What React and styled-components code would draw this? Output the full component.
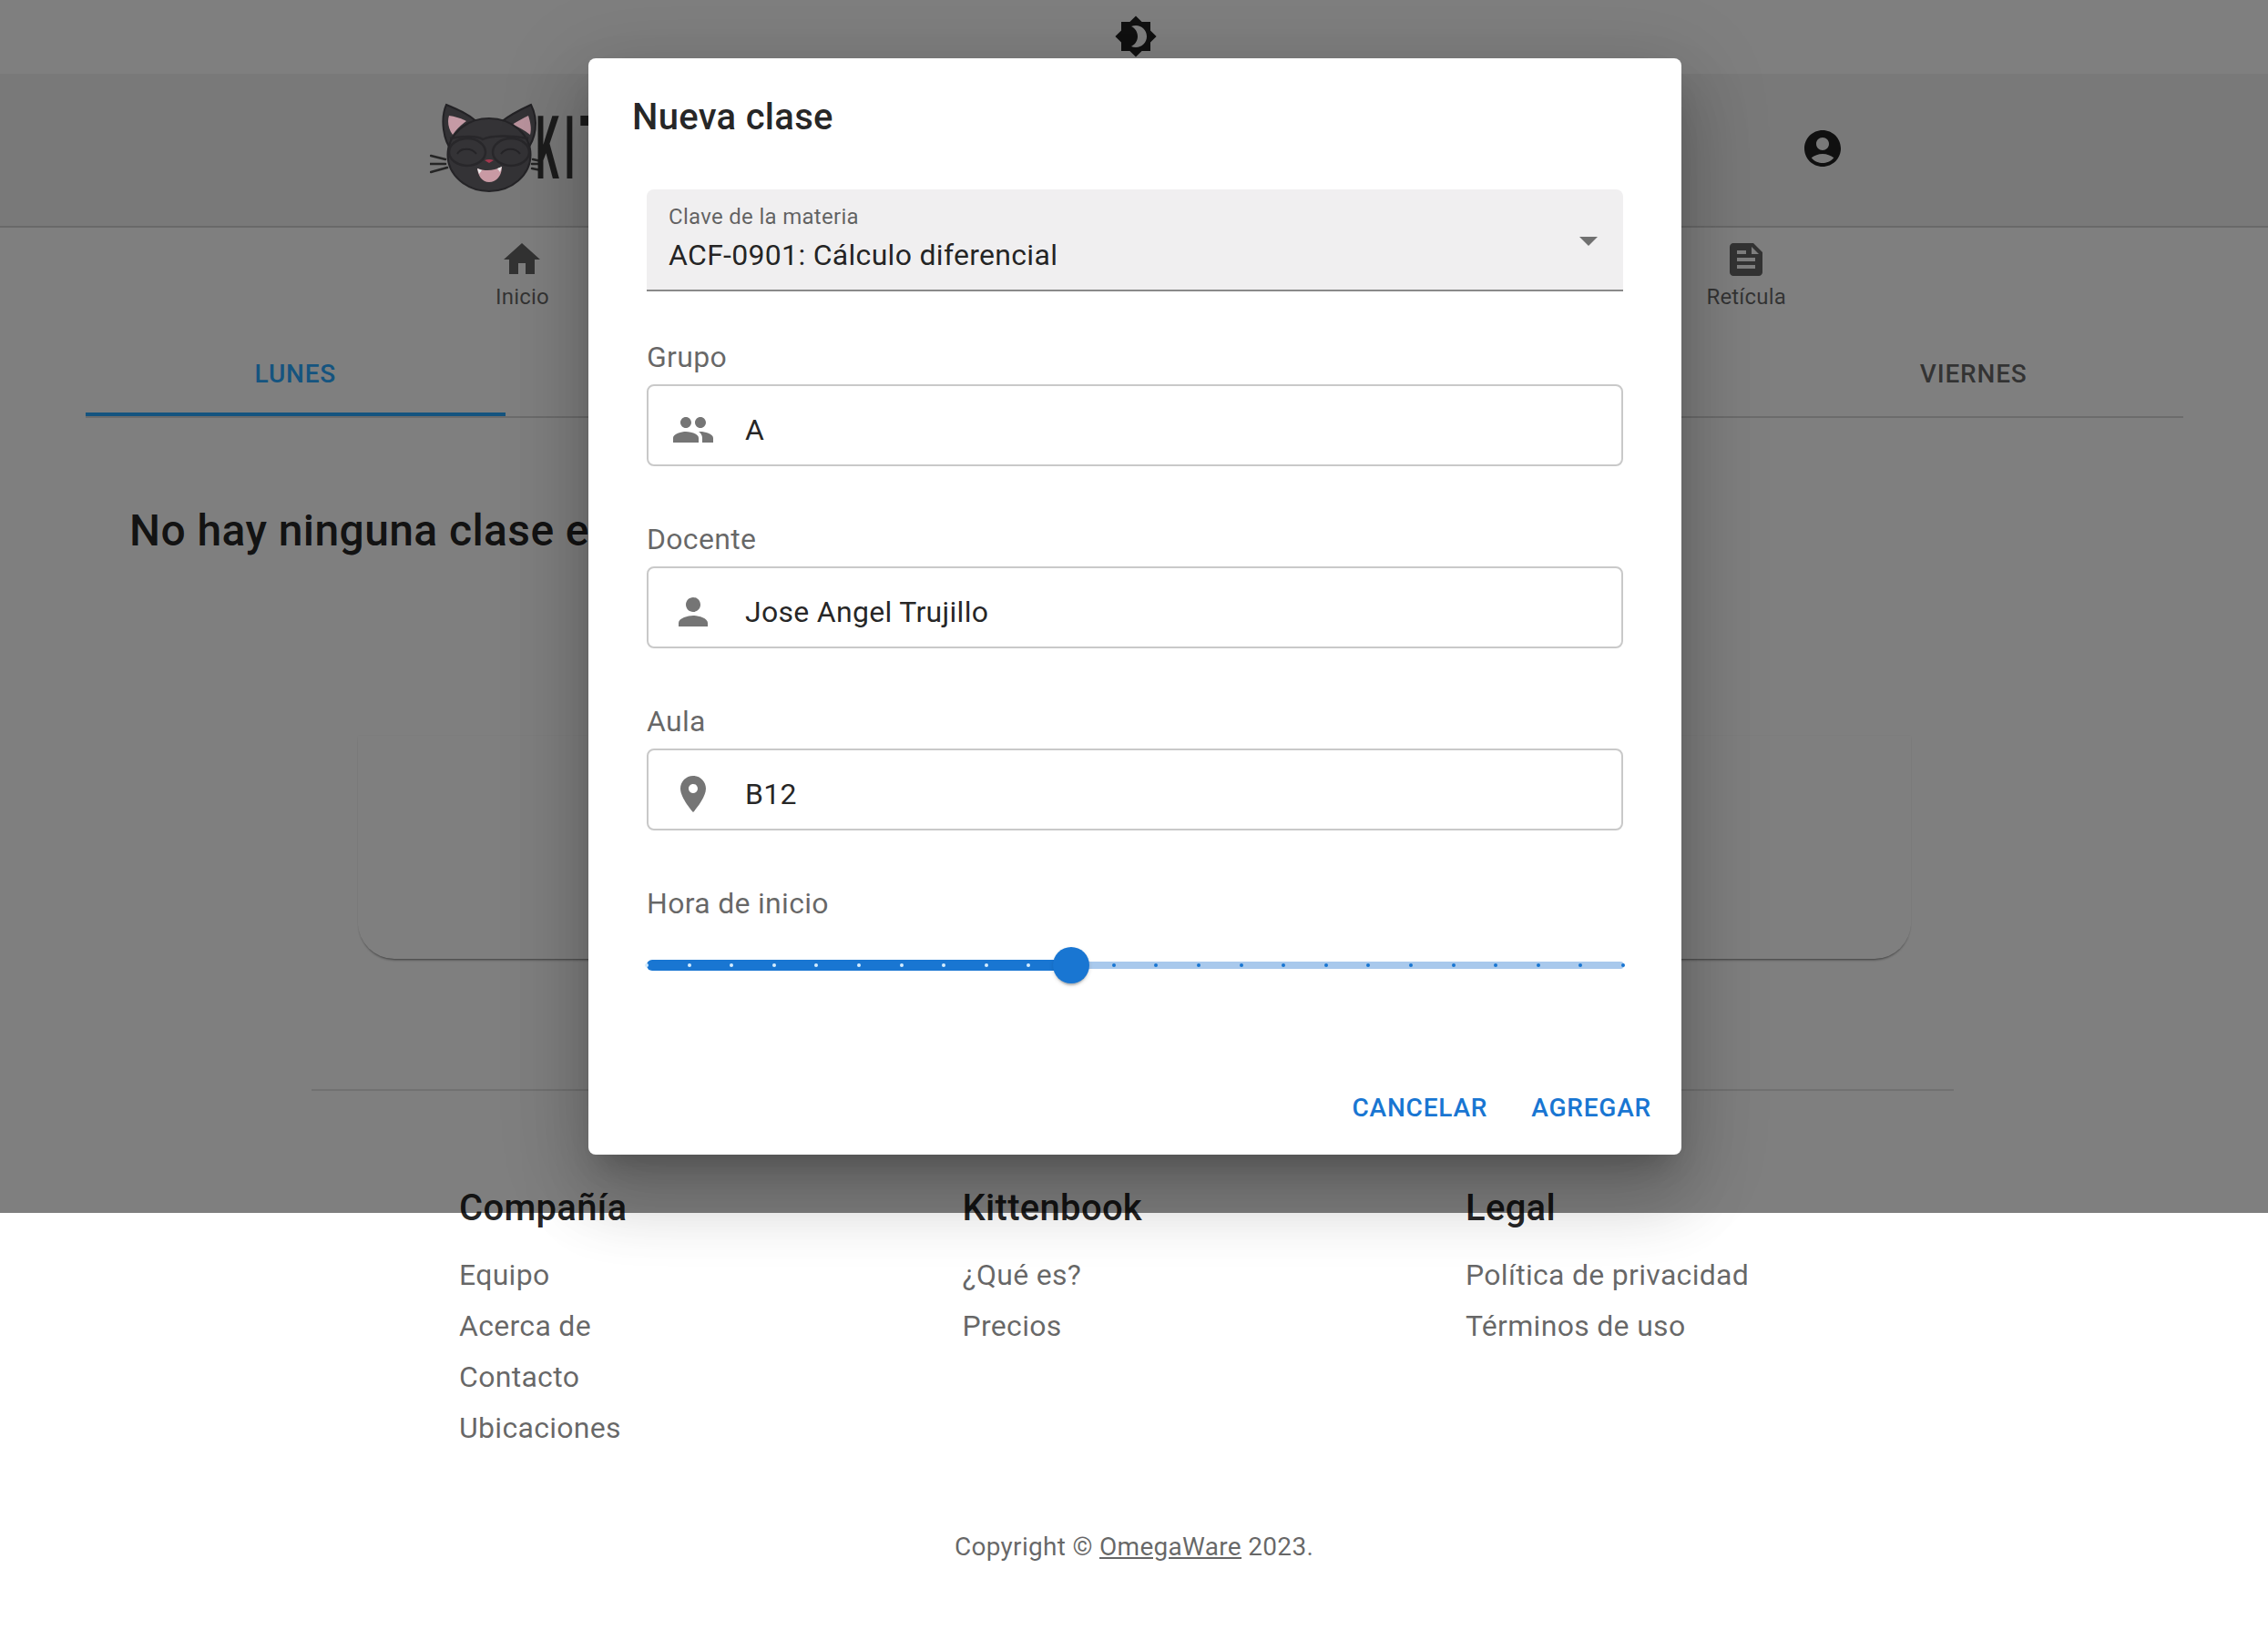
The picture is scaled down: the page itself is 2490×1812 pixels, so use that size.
import React from 'react';
import styled, { createGlobalStyle } from 'styled-components';

const HOURS = 23;
const CURRENT_HOUR = 10;

const icons = {
    theme: 'M20 8.69V4h-4.69L12 .69 8.69 4H4v4.69L.69 12 4 15.31V20h4.69L12 23.31 15.31 20H20v-4.69L23.31 12 20 8.69zM12 18c-.89 0-1.74-.2-2.5-.55C11.56 16.5 13 14.42 13 12s-1.44-4.5-3.5-5.45C10.26 6.2 11.11 6 12 6c3.31 0 6 2.69 6 6s-2.69 6-6 6z',
    home: 'M10 20v-6h4v6h5v-8h3L12 3 2 12h3v8z',
    account: 'M12 2C6.48 2 2 6.48 2 12s4.48 10 10 10 10-4.48 10-10S17.52 2 12 2zm0 4c1.93 0 3.5 1.57 3.5 3.5S13.93 13 12 13s-3.5-1.57-3.5-3.5S10.07 6 12 6zm0 14c-2.03 0-4.43-.82-6.14-2.88C7.55 15.8 9.68 15 12 15s4.45.8 6.14 2.12C16.43 19.18 14.03 20 12 20z',
    feed: 'M16 3H5c-1.1 0-1.99.9-1.99 2L3 19c0 1.1.89 2 1.99 2H19c1.1 0 2-.9 2-2V8l-5-5zM7 7h5v2H7V7zm10 10H7v-2h10v2zm0-4H7v-2h10v2zm-2-4V5l4 4h-4z',
    people: 'M16 11c1.66 0 2.99-1.34 2.99-3S17.66 5 16 5c-1.66 0-3 1.34-3 3s1.34 3 3 3zm-8 0c1.66 0 2.99-1.34 2.99-3S9.66 5 8 5C6.34 5 5 6.34 5 8s1.34 3 3 3zm0 2c-2.33 0-7 1.17-7 3.5V19h14v-2.5c0-2.33-4.67-3.5-7-3.5zm8 0c-.29 0-.62.02-.97.05 1.16.84 1.97 1.97 1.97 3.45V19h6v-2.5c0-2.33-4.67-3.5-7-3.5z',
    person: 'M12 12c2.21 0 4-1.79 4-4s-1.79-4-4-4-4 1.79-4 4 1.79 4 4 4zm0 2c-2.67 0-8 1.34-8 4v2h16v-2c0-2.66-5.33-4-8-4z',
    place: 'M12 2C8.13 2 5 5.13 5 9c0 5.25 7 13 7 13s7-7.75 7-13c0-3.87-3.13-7-7-7zm0 9.5c-1.38 0-2.5-1.12-2.5-2.5s1.12-2.5 2.5-2.5 2.5 1.12 2.5 2.5-1.12 2.5-2.5 2.5z',
    arrow: 'M7 10l5 5 5-5z',
};

const footerColumns = [
    { title: 'Compañía', links: ['Equipo', 'Acerca de', 'Contacto', 'Ubicaciones'] },
    { title: 'Kittenbook', links: ['¿Qué es?', 'Precios'] },
    { title: 'Legal', links: ['Política de privacidad', 'Términos de uso'] },
];

const fields = [
    { label: 'Grupo', icon: 'people', value: 'A' },
    { label: 'Docente', icon: 'person', value: 'Jose Angel Trujillo' },
    { label: 'Aula', icon: 'place', value: 'B12' },
];

function Icon({ name, size = 48, color = 'currentColor' }) {
    return (
        <svg width={size} height={size} viewBox="0 0 24 24" fill={color}>
            <path d={icons[name]} />
        </svg>
    );
}

function CatLogo() {
    return (
        <svg width="124" height="100" viewBox="0 -2 124 100">
            {/* ears */}
            <path d="M24 50 C15 40 11 16 18 0 C30 5 42 10 52 19 L30 40z" fill="#333235" stroke="#232225" strokeWidth="2" />
            <path d="M106 50 C116 38 120 18 111 0 C100 5 88 11 78 19 L100 40z" fill="#333235" stroke="#232225" strokeWidth="2" />
            <path d="M25 33 C20 26 19 18 21 12 C28 13 35 15 40 18 C34 22 29 27 25 33z" fill="#c59aa5" />
            <path d="M110 33 C112 26 110 18 108 12 C102 15 96 18 90 22 C97 24 104 28 110 33z" fill="#b9929c" />
            {/* head */}
            <ellipse cx="65" cy="55" rx="45.5" ry="40" fill="#343336" stroke="#252427" strokeWidth="2" />
            {/* glasses and closed eyes */}
            <g fill="none" stroke="#28272a" strokeWidth="2.5">
                <path d="M22 37 C40 34 52 34 58 38 C66 34 88 33 108 37" />
                <ellipse cx="41" cy="52" rx="20" ry="15" />
                <ellipse cx="89" cy="52" rx="20" ry="15" />
            </g>
            <g fill="none" stroke="#252427" strokeWidth="2">
                <path d="M30 54 C34 47 46 47 51 54" />
                <path d="M78 54 C83 47 94 47 99 54" />
            </g>
            {/* nose and mouth */}
            <path d="M60 61 Q65 59 70 61 L65 64z" fill="#a5384f" />
            <path d="M52 70 C60 73 70 73 79 68 C79 78 73 85 65 85 C57 85 53 78 52 70z" fill="#c99aa4" />
            <path d="M52 70 L57 72 L54 76z M79 68 L74 70 L77 74z" fill="#e8e8e8" />
            {/* whiskers */}
            <g stroke="#252525" strokeWidth="2.5" strokeLinecap="round">
                <path d="M1 56 L17 60" />
                <path d="M0 65 L17 65" />
                <path d="M1 74 L19 69" />
                <path d="M113 60 L122 62" />
                <path d="M112 65 L122 65" />
                <path d="M112 70 L122 72" />
            </g>
        </svg>
    );
}

function App() {
    const ticks = Array.from({ length: HOURS + 1 }, (_, i) => i);
    const percent = (CURRENT_HOUR / HOURS) * 100;

    return (
        <Page>
            <GlobalStyle />
            <TopBar>
                <Icon name="theme" />
            </TopBar>
            <Header>
                <Logo>
                    <CatLogo />
                    <LogoText>KITTENBOOK</LogoText>
                </Logo>
                <Icon name="account" />
            </Header>
            <Nav>
                <NavItem>
                    <Icon name="home" />
                    <span>Inicio</span>
                </NavItem>
                <NavItem>
                    <Icon name="feed" />
                    <span>Retícula</span>
                </NavItem>
            </Nav>
            <Tabs>
                <Tab $active>Lunes</Tab>
                <Tab>Martes</Tab>
                <Tab>Miércoles</Tab>
                <Tab>Jueves</Tab>
                <Tab>Viernes</Tab>
            </Tabs>
            <Panel>
                <EmptyTitle>No hay ninguna clase este día</EmptyTitle>
                <Card />
            </Panel>
            <Divider />
            <Footer>
                <FooterColumns>
                    {footerColumns.map((column) => (
                        <FooterColumn key={column.title}>
                            <FooterTitle>{column.title}</FooterTitle>
                            {column.links.map((link) => (
                                <FooterLink key={link}>{link}</FooterLink>
                            ))}
                        </FooterColumn>
                    ))}
                </FooterColumns>
                <Copyright>
                    Copyright © <u>OmegaWare</u> 2023.
                </Copyright>
            </Footer>

            <Backdrop>
                <Dialog>
                    <DialogTitle>Nueva clase</DialogTitle>
                    <DialogContent>
                        <SelectBox>
                            <SelectLabel>Clave de la materia</SelectLabel>
                            <SelectValue>ACF-0901: Cálculo diferencial</SelectValue>
                            <SelectArrow>
                                <Icon name="arrow" color="#707070" />
                            </SelectArrow>
                        </SelectBox>
                        {fields.map((field) => (
                            <Field key={field.label}>
                                <FieldLabel>{field.label}</FieldLabel>
                                <InputBox>
                                    <Icon name={field.icon} color="#757575" />
                                    <InputText>{field.value}</InputText>
                                </InputBox>
                            </Field>
                        ))}
                        <Field>
                            <FieldLabel>Hora de inicio</FieldLabel>
                            <Slider>
                                <Rail />
                                <SliderFill style={{ width: `${percent}%` }} />
                                {ticks.map((tick) => (
                                    <Tick
                                        key={tick}
                                        $active={tick < CURRENT_HOUR}
                                        style={{ left: `${(tick / HOURS) * 100}%` }}
                                    />
                                ))}
                                <Thumb style={{ left: `${percent}%` }} />
                            </Slider>
                        </Field>
                    </DialogContent>
                    <DialogActions>
                        <TextButton>Cancelar</TextButton>
                        <TextButton>Agregar</TextButton>
                    </DialogActions>
                </Dialog>
            </Backdrop>
        </Page>
    );
}

const GlobalStyle = createGlobalStyle`
    html, body {
        margin: 0;
        padding: 0;
        background: #fff;
    }
    body {
        font-family: Roboto, "Liberation Sans", sans-serif;
        color: rgba(0, 0, 0, 0.87);
    }
`;

const Page = styled.div`
    position: relative;
    width: 2490px;
    height: 1812px;
    overflow: hidden;
    background: #fff;
`;

const TopBar = styled.div`
    height: 81px;
    box-sizing: border-box;
    padding: 0 0 2px 3px;
    display: flex;
    align-items: center;
    justify-content: center;
    color: #212121;
`;

const Header = styled.header`
    height: 169px;
    box-sizing: border-box;
    background: #f2f2f2;
    border-bottom: 2px solid #d2d2d2;
    display: flex;
    align-items: center;
    justify-content: space-between;
    padding: 0 465px 3px 472px;
    color: #212121;
`;

const Logo = styled.div`
    position: relative;
    z-index: 2;
    display: flex;
    align-items: center;
    height: 100px;
`;

const LogoText = styled.span`
    display: inline-block;
    width: 100px;
    margin-left: -8px;
    font-size: 96px;
    line-height: 100px;
    font-weight: 700;
    letter-spacing: 14px;
    white-space: nowrap;
    color: #1c1c1c;
    transform: scaleX(0.42);
    transform-origin: left center;
`;

const Nav = styled.nav`
    height: 117px;
    box-sizing: border-box;
    display: flex;
    justify-content: space-between;
    padding: 11px 529px 0 544px;
`;

const NavItem = styled.div`
    display: flex;
    flex-direction: column;
    align-items: center;
    gap: 3px;
    color: rgba(0, 0, 0, 0.6);
    font-size: 24px;
    letter-spacing: 0.2px;
`;

const Tabs = styled.div`
    margin: 0 93px 0 94px;
    height: 90px;
    display: grid;
    grid-template-columns: repeat(5, 1fr);
    border-bottom: 2px solid #d8d8d8;
`;

const Tab = styled.div`
    display: flex;
    align-items: center;
    justify-content: center;
    height: 90px;
    box-sizing: border-box;
    font-size: 28px;
    font-weight: 500;
    letter-spacing: 0.8px;
    text-transform: uppercase;
    color: ${(props) => (props.$active ? '#2aa8ff' : 'rgba(0, 0, 0, 0.6)')};
    border-bottom: 4px solid ${(props) => (props.$active ? '#2aa8ff' : 'transparent')};
`;

const Panel = styled.section`
    height: 737px;
    box-sizing: border-box;
    padding: 96px 48px 0;
    margin-left: 94px;
`;

const EmptyTitle = styled.h2`
    margin: 0;
    font-size: 48px;
    line-height: 56px;
    font-weight: 500;
    letter-spacing: 0.4px;
    color: rgba(0, 0, 0, 0.87);
    white-space: nowrap;
`;

const Card = styled.div`
    margin: 197px 0 0 251px;
    width: 1705px;
    height: 245px;
    border-radius: 0 0 40px 40px;
    box-shadow: 0 3px 3px -2px rgba(0, 0, 0, 0.55), 0 0 2px rgba(0, 0, 0, 0.08);
`;

const Divider = styled.hr`
    margin: 0 345px 0 342px;
    border: 0;
    border-top: 2px solid #e3e3e3;
`;

const Footer = styled.footer`
    padding: 102px 0 0 504px;
`;

const FooterColumns = styled.div`
    display: grid;
    grid-template-columns: repeat(3, 552.5px);
    height: 379px;
`;

const FooterColumn = styled.div`
    display: flex;
    flex-direction: column;
`;

const FooterTitle = styled.h3`
    margin: 0 0 18px;
    height: 54px;
    font-size: 40px;
    line-height: 54px;
    font-weight: 500;
    letter-spacing: 0.3px;
    color: rgba(0, 0, 0, 0.87);
`;

const FooterLink = styled.a`
    display: block;
    height: 56px;
    font-size: 32px;
    line-height: 56px;
    letter-spacing: 0.3px;
    color: rgba(0, 0, 0, 0.6);
`;

const Copyright = styled.p`
    margin: 0 0 0 -504px;
    text-align: center;
    font-size: 28px;
    line-height: 40px;
    letter-spacing: 0.3px;
    color: rgba(0, 0, 0, 0.6);
`;

const Backdrop = styled.div`
    position: absolute;
    left: 0;
    top: 0;
    width: 100%;
    height: 1332px;
    background: rgba(0, 0, 0, 0.5);
    display: flex;
    align-items: center;
    justify-content: center;
`;

const Dialog = styled.div`
    position: relative;
    z-index: 3;
    left: 1px;
    width: 1200px;
    height: 1204px;
    box-sizing: border-box;
    background: #fff;
    border-radius: 8px;
    box-shadow: 0 22px 30px -14px rgba(0, 0, 0, 0.2), 0 48px 76px 6px rgba(0, 0, 0, 0.14),
        0 18px 92px 16px rgba(0, 0, 0, 0.12);
    display: flex;
    flex-direction: column;
`;

const DialogTitle = styled.h2`
    margin: 0;
    padding: 33px 48px 31px;
    font-size: 40px;
    line-height: 64px;
    font-weight: 500;
    letter-spacing: 0.3px;
    color: rgba(0, 0, 0, 0.87);
`;

const DialogContent = styled.div`
    flex: 1;
    padding: 16px 64px 0;
    display: flex;
    flex-direction: column;
`;

const SelectBox = styled.div`
    position: relative;
    height: 112px;
    box-sizing: border-box;
    padding: 16px 24px 0;
    background: #f0eff0;
    border-radius: 8px 8px 0 0;
    border-bottom: 2px solid #8a8a8a;
`;

const SelectLabel = styled.div`
    font-size: 24px;
    line-height: 28px;
    letter-spacing: 0.3px;
    color: rgba(0, 0, 0, 0.6);
`;

const SelectValue = styled.div`
    margin-top: 6px;
    font-size: 32px;
    line-height: 44px;
    letter-spacing: 0.3px;
    color: rgba(0, 0, 0, 0.87);
`;

const SelectArrow = styled.div`
    position: absolute;
    right: 14px;
    top: 32px;
`;

const Field = styled.div`
    margin-top: 58px;

    ${SelectBox} + & {
        margin-top: 50px;
    }
`;

const FieldLabel = styled.div`
    font-size: 32px;
    line-height: 44px;
    letter-spacing: 0.3px;
    color: rgba(0, 0, 0, 0.6);
    margin-bottom: 8px;
`;

const InputBox = styled.div`
    height: 90px;
    box-sizing: border-box;
    border: 2px solid #c9c9c9;
    border-radius: 8px;
    display: flex;
    align-items: center;
    gap: 33px;
    padding: 10px 0 0 25px;
`;

const InputText = styled.span`
    font-size: 32px;
    letter-spacing: 0.3px;
    color: rgba(0, 0, 0, 0.87);
`;

const Slider = styled.div`
    position: relative;
    height: 40px;
    margin-top: 26px;
`;

const Rail = styled.div`
    position: absolute;
    left: 0;
    right: -1px;
    top: 16px;
    height: 8px;
    border-radius: 4px;
    background: #a9c9ec;
`;

const SliderFill = styled.div`
    position: absolute;
    left: 0;
    top: 14px;
    height: 12px;
    border-radius: 6px;
    background: #1976d2;
`;

const Tick = styled.span`
    position: absolute;
    top: 18px;
    width: 4px;
    height: 4px;
    margin-left: -2px;
    border-radius: 50%;
    background: ${(props) => (props.$active ? '#d4ecff' : '#1976d2')};
`;

const Thumb = styled.span`
    position: absolute;
    top: 0;
    width: 40px;
    height: 40px;
    margin-left: -20px;
    border-radius: 50%;
    background: #1976d2;
    box-shadow: 0 4px 2px -2px rgba(0, 0, 0, 0.2), 0 2px 4px rgba(0, 0, 0, 0.14);
`;

const DialogActions = styled.div`
    display: flex;
    justify-content: flex-end;
    gap: 48px;
    padding: 0 33px 31px 0;
`;

const TextButton = styled.button`
    border: 0;
    padding: 0;
    background: transparent;
    font-family: inherit;
    font-size: 28px;
    line-height: 40px;
    font-weight: 500;
    letter-spacing: 0.8px;
    text-transform: uppercase;
    color: #1976d2;
`;

export default App;
